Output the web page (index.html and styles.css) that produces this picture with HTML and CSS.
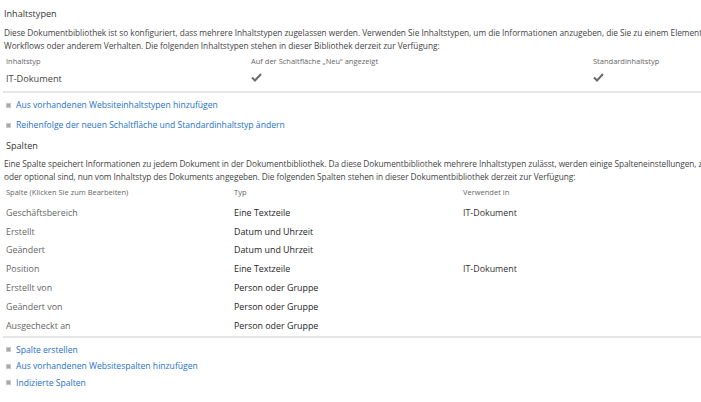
FILE: index.html
```html
<!DOCTYPE html>
<html lang="de">
<head>
<meta charset="utf-8">
<link rel="stylesheet" href="styles.css">
</head>
<body>
<div class="page">
  <section class="section">
    <h2 class="title">Inhaltstypen</h2>
    <p class="desc d1"><span class="line">Diese Dokumentbibliothek ist so konfiguriert, dass mehrere Inhaltstypen zugelassen werden. Verwenden Sie Inhaltstypen, um die Informationen anzugeben, die Sie zu einem Element an</span><span class="line">Workflows oder anderem Verhalten. Die folgenden Inhaltstypen stehen in dieser Bibliothek derzeit zur Verfügung:</span></p>
    <div class="ctable">
      <div class="row head"><span>Inhaltstyp</span><span>Auf der Schaltfläche „Neu“ angezeigt</span><span>Standardinhaltstyp</span></div>
      <div class="row body"><span>IT-Dokument</span><span class="check"><svg width="11" height="9" viewBox="0 0 11 9"><path d="M1 4.5 L4 7.5 L10 1" fill="none" stroke="#6b6b6b" stroke-width="2"/></svg></span><span class="check"><svg width="11" height="9" viewBox="0 0 11 9"><path d="M1 4.5 L4 7.5 L10 1" fill="none" stroke="#6b6b6b" stroke-width="2"/></svg></span></div>
    </div>
    <ul class="links first">
      <li><a href="#">Aus vorhandenen Websiteinhaltstypen hinzufügen</a></li>
      <li><a href="#">Reihenfolge der neuen Schaltfläche und Standardinhaltstyp ändern</a></li>
    </ul>
  </section>
  <section class="section">
    <h2 class="title t2">Spalten</h2>
    <p class="desc d2"><span class="line">Eine Spalte speichert Informationen zu jedem Dokument in der Dokumentbibliothek. Da diese Dokumentbibliothek mehrere Inhaltstypen zulässt, werden einige Spalteneinstellungen, z. B.</span><span class="line">oder optional sind, nun vom Inhaltstyp des Dokuments angegeben. Die folgenden Spalten stehen in dieser Dokumentbibliothek derzeit zur Verfügung:</span></p>
    <div class="stable">
      <div class="row head"><span>Spalte (Klicken Sie zum Bearbeiten)</span><span>Typ</span><span>Verwendet in</span></div>
      <div class="row body"><span class="name">Geschäftsbereich</span><span class="type">Eine Textzeile</span><span class="used">IT-Dokument</span></div>
      <div class="row body"><span class="name">Erstellt</span><span class="type">Datum und Uhrzeit</span><span class="used"></span></div>
      <div class="row body"><span class="name">Geändert</span><span class="type">Datum und Uhrzeit</span><span class="used"></span></div>
      <div class="row body"><span class="name">Position</span><span class="type">Eine Textzeile</span><span class="used">IT-Dokument</span></div>
      <div class="row body"><span class="name">Erstellt von</span><span class="type">Person oder Gruppe</span><span class="used"></span></div>
      <div class="row body"><span class="name">Geändert von</span><span class="type">Person oder Gruppe</span><span class="used"></span></div>
      <div class="row body"><span class="name">Ausgecheckt an</span><span class="type">Person oder Gruppe</span><span class="used"></span></div>
    </div>
    <ul class="links second">
      <li><a href="#">Spalte erstellen</a></li>
      <li><a href="#">Aus vorhandenen Websitespalten hinzufügen</a></li>
      <li><a href="#">Indizierte Spalten</a></li>
    </ul>
  </section>
</div>
</body>
</html>
```
FILE: styles.css
```css
html, body {
  margin: 0;
  padding: 0;
  background: #fff;
  overflow: hidden;
}
body {
  width: 701px;
  height: 402px;
  font-family: "Open Sans", "Noto Sans", sans-serif;
  color: #444;
}
.page {
  width: 760px;
  padding: 6px 0 0 4px;
}
.title {
  margin: 0;
  font-size: 9.1px;
  font-weight: normal;
  color: #333;
  line-height: 16px;
  height: 16px;
}
.t2 {
  padding-left: 2px;
  margin-top: 3px;
}
.desc {
  font-size: 8.3px;
  color: #444;
}
.d1 {
  margin: 5px 0 0 0;
  line-height: 12.5px;
  letter-spacing: -0.03px;
}
.d2 {
  margin: 3px 0 0 0;
  line-height: 13px;
  letter-spacing: -0.06px;
}
.line {
  display: block;
  white-space: nowrap;
}
.row {
  display: grid;
  align-items: center;
  padding-left: 2px;
}
.ctable .row {
  grid-template-columns: 245px 342px 1fr;
}
.stable .row {
  grid-template-columns: 228px 229px 1fr;
}
.head {
  font-size: 7.5px;
  color: #666;
  height: 16px;
  margin-top: 1px;
}
.stable .head {
  margin-bottom: 3px;
}
.ctable .body {
  font-size: 9.2px;
  height: 18px;
  padding-bottom: 4px;
  color: #444;
  border-bottom: 2px solid #e6e6e6;
  margin-left: -1px;
  padding-left: 3px;
}
.check svg { display: block; margin-top: -2px; }
.stable .body {
  font-size: 8.9px;
  height: 18.8px;
}
.stable .body:last-child {
  height: 18.8px;
  padding-bottom: 1px;
  border-bottom: 2px solid #e6e6e6;
  margin-left: -1px;
  padding-left: 3px;
}
.name { color: #666; }
.type { color: #1e1e1e; }
.used { color: #333; }
.links {
  list-style: none;
  margin: 0;
  padding: 0 0 0 2px;
  font-size: 8.6px;
}
.links li {
  display: flex;
  align-items: center;
  gap: 5px;
}
.links li::before {
  content: "";
  width: 3px;
  height: 3px;
  background: #a8a8a8;
  border: 0.5px solid #c8c8c8;
}
.links a {
  color: #1e72c8;
  text-decoration: none;
}
.first { margin-top: 2px; }
.first li { height: 20px; }
.second { margin-top: 4px; }
.second li { height: 16.5px; }
```
